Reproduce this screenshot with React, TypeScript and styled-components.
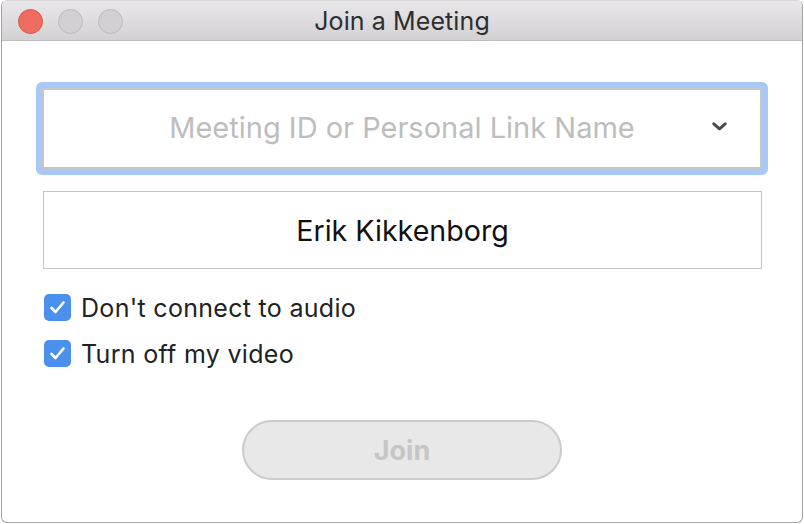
import React from "react";
import styled, { createGlobalStyle } from "styled-components";

const Global = createGlobalStyle`
  html, body { margin: 0; padding: 0; background: #ffffff; }
  body { font-family: Inter, "Liberation Sans", sans-serif; }
  * { box-sizing: border-box; }
`;

const Window = styled.div`
  margin-left: 1px;
  width: 802px;
  height: 523px;
  background: #ffffff;
  border: 1px solid #a4a4a4;
  border-top-color: #d8d8d8;
  border-radius: 6px;
  overflow: hidden;
  display: flex;
  flex-direction: column;
`;

const TitleBar = styled.div`
  height: 40px;
  flex: none;
  background: linear-gradient(#e9e7e9, #d3d1d3);
  border-bottom: 1px solid #bcbcbc;
  display: grid;
  grid-template-columns: 140px 1fr 140px;
  align-items: center;
`;

const Lights = styled.div`
  display: flex;
  gap: 15px;
  padding-left: 16px;
  padding-top: 1px;
`;

const Light = styled.span<{ $color: string; $edge: string }>`
  width: 25px;
  height: 25px;
  border-radius: 50%;
  background: ${(p) => p.$color};
  border: 1px solid ${(p) => p.$edge};
`;

const Title = styled.div`
  text-align: center;
  font-size: 25px;
  color: #2e2e2e;
  letter-spacing: 0.1px;
`;

const Content = styled.div`
  padding: 41px 34px 0 34px;
  display: flex;
  flex-direction: column;
  align-items: flex-start;
`;

const FocusRing = styled.div`
  width: 732px;
  height: 93px;
  padding: 6px;
  background: #a8c9f5;
  border-radius: 6px;
`;

const ComboField = styled.div`
  height: 100%;
  background: #ffffff;
  border: 2px solid #c6c6c6;
  display: grid;
  grid-template-columns: 70px 1fr 70px;
  align-items: center;
`;

const Placeholder = styled.span`
  grid-column: 2;
  text-align: center;
  font-size: 29px;
  color: #bdbdbd;
  padding-bottom: 3px;
`;

const Chevron = styled.svg`
  grid-column: 3;
  justify-self: start;
  margin-left: 22px;
  margin-bottom: 4px;
`;

const NameField = styled.div`
  margin: 16px 0 0 7px;
  width: 719px;
  height: 78px;
  border: 1px solid #c4c4c4;
  display: flex;
  align-items: center;
  justify-content: center;
  font-size: 28.6px;
  color: #111111;
`;

const CheckRow = styled.label<{ $top: number }>`
  margin: ${(p) => p.$top}px 0 0 8px;
  display: flex;
  align-items: center;
  gap: 10px;
  height: 27px;
  font-size: 25px;
  letter-spacing: 0.3px;
  color: #222222;
`;

const Box = styled.span`
  width: 27px;
  height: 27px;
  border-radius: 5px;
  background: #4c90ee;
  display: flex;
  align-items: center;
  justify-content: center;
`;

const JoinButton = styled.button`
  align-self: center;
  margin-top: 53px;
  width: 320px;
  height: 60px;
  border-radius: 30px;
  border: 2px solid #cbcbcb;
  background: #e8e8e8;
  color: #c6c6c6;
  font-family: Inter, "Liberation Sans", sans-serif;
  font-weight: 700;
  font-size: 27px;
  padding: 0;
`;

const Check = () => (
  <svg width="17" height="15" viewBox="0 0 17 15">
    <polyline points="2.5,8 6.5,12 14.5,2.5" fill="none" stroke="#ffffff" strokeWidth="2.6" strokeLinecap="round" strokeLinejoin="round" />
  </svg>
);

export default function App() {
  return (
    <>
      <Global />
      <Window>
        <TitleBar>
          <Lights>
            <Light $color="#ee6b60" $edge="#d8574c" />
            <Light $color="#d2d0d2" $edge="#bdbbbd" />
            <Light $color="#d2d0d2" $edge="#bdbbbd" />
          </Lights>
          <Title>Join a Meeting</Title>
          <span />
        </TitleBar>
        <Content>
          <FocusRing>
            <ComboField>
              <Placeholder>Meeting ID or Personal Link Name</Placeholder>
              <Chevron width="15" height="9" viewBox="0 0 15 9">
                <polyline points="1.8,1.8 7.5,6.8 13.2,1.8" fill="none" stroke="#4a4a4a" strokeWidth="3" strokeLinecap="round" strokeLinejoin="round" />
              </Chevron>
            </ComboField>
          </FocusRing>
          <NameField>Erik Kikkenborg</NameField>
          <CheckRow $top={25}>
            <Box><Check /></Box>
            Don't connect to audio
          </CheckRow>
          <CheckRow $top={19}>
            <Box><Check /></Box>
            Turn off my video
          </CheckRow>
          <JoinButton>Join</JoinButton>
        </Content>
      </Window>
    </>
  );
}
